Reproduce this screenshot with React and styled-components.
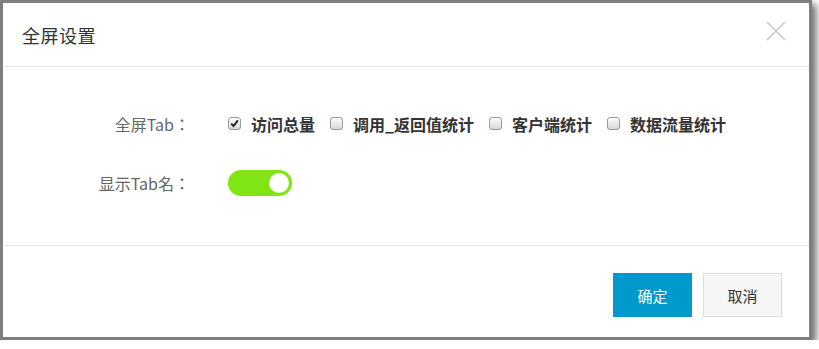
import React, { useState } from 'react';
import styled, { createGlobalStyle } from 'styled-components';

const GlobalStyle = createGlobalStyle`
  html, body {
    margin:       0;
    padding:      0;
    background:   #ffffff;
  }
  body {
    font-family:  "Noto Sans CJK SC", "Liberation Sans", sans-serif;
  }
`

const Frame = styled.div`
  width:            812px;
  height:           340px;
  box-sizing:       border-box;
  border:           3px solid #7f7f7f;
  background:       #ffffff;
  box-shadow:       4px 4px 8px rgba(0, 0, 0, 0.6);
  display:          flex;
  flex-direction:   column;
`

const Header = styled.div`
  height:           63px;
  display:          flex;
  align-items:      center;
  justify-content:  space-between;
  padding:          0 22px 0 19px;
  border-bottom:    1px solid #e6e6e6;
  flex-shrink:      0;
`

const Title = styled.div`
  font-size:        18px;
  color:            #333333;
  letter-spacing:   0.5px;
`

const CloseButton = styled.button`
  width:            22px;
  height:           22px;
  padding:          0;
  border:           none;
  background:       transparent;
  cursor:           pointer;
  display:          flex;
  align-items:      center;
  justify-content:  center;
  margin-top:       -8px;
`

const Body = styled.div`
  flex:             1;
  padding-top:      44px;
  display:          flex;
  flex-direction:   column;
  gap:              33px;
  border-bottom:    1px solid #e6e6e6;
`

const Row = styled.div`
  height:           26px;
  display:          flex;
  align-items:      center;
  gap:              38px;
`

const Label = styled.div`
  width:            187px;
  text-align:       right;
  font-family:      "Noto Sans CJK JP", "Noto Sans CJK SC", sans-serif;
  font-size:        16px;
  color:            #666666;
`

const Options = styled.div`
  display:          flex;
  align-items:      center;
  gap:              15px;
`

const Option = styled.label`
  display:          flex;
  align-items:      center;
  gap:              10px;
  cursor:           pointer;
  font-size:        16px;
  font-weight:      700;
  color:            #333333;
`

const Box = styled.span`
  width:            13px;
  height:           13px;
  box-sizing:       border-box;
  border:           1px solid #9a9a9a;
  border-radius:    3px;
  background:       linear-gradient(#fdfdfd, #d8d8d8);
  display:          flex;
  align-items:      center;
  justify-content:  center;
  margin-top:       -2px;
`

const Switch = styled.button`
  width:            64px;
  height:           26px;
  padding:          3px;
  border:           none;
  border-radius:    13px;
  background:       ${p => (p.$on ? '#7fe515' : '#cccccc')};
  display:          flex;
  align-items:      center;
  justify-content:  ${p => (p.$on ? 'flex-end' : 'flex-start')};
  cursor:           pointer;
`

const Knob = styled.span`
  width:            20px;
  height:           20px;
  border-radius:    50%;
  background:       #ffffff;
`

const Footer = styled.div`
  height:           91px;
  display:          flex;
  justify-content:  flex-end;
  align-items:      flex-start;
  gap:              11px;
  padding:          27px 27px 0 0;
  box-sizing:       border-box;
  flex-shrink:      0;
`

const Button = styled.button`
  width:            79px;
  height:           44px;
  box-sizing:       border-box;
  font-family:      inherit;
  font-size:        15px;
  cursor:           pointer;
  border:           1px solid ${p => (p.$primary ? '#0099cc' : '#dddddd')};
  background:       ${p => (p.$primary ? '#0099cc' : '#f6f6f6')};
  color:            ${p => (p.$primary ? '#ffffff' : '#333333')};
`

const tabs = [
  { name: '访问总量', checked: true },
  { name: '调用_返回值统计', checked: false },
  { name: '客户端统计', checked: false },
  { name: '数据流量统计', checked: false }
]

function CheckBox({ checked }) {
  return (
    <Box>
      {checked && (
        <svg width="9" height="9" viewBox="0 0 9 9">
          <path d="M1.2 4.6 L3.5 7 L7.9 1.4" fill="none" stroke="#222" strokeWidth="1.9" />
        </svg>
      )}
    </Box>
  );
}

export default function App() {
  const [checked, setChecked] = useState(tabs.map(t => t.checked));
  const [showName, setShowName] = useState(true);

  return (
    <Frame>
      <GlobalStyle />
      <Header>
        <Title>全屏设置</Title>
        <CloseButton aria-label="关闭">
          <svg width="20" height="20" viewBox="0 0 20 20">
            <path d="M1 1 L19 19 M19 1 L1 19" stroke="#c9c9c9" strokeWidth="1.6" fill="none" />
          </svg>
        </CloseButton>
      </Header>
      <Body>
        <Row>
          <Label>全屏Tab：</Label>
          <Options>
            {tabs.map((t, i) => (
              <Option
                key={t.name}
                onClick={() => setChecked(c => c.map((v, j) => (j === i ? !v : v)))}
              >
                <CheckBox checked={checked[i]} />
                {t.name}
              </Option>
            ))}
          </Options>
        </Row>
        <Row>
          <Label>显示Tab名：</Label>
          <Switch $on={showName} onClick={() => setShowName(v => !v)}>
            <Knob />
          </Switch>
        </Row>
      </Body>
      <Footer>
        <Button $primary>确定</Button>
        <Button>取消</Button>
      </Footer>
    </Frame>
  );
}
